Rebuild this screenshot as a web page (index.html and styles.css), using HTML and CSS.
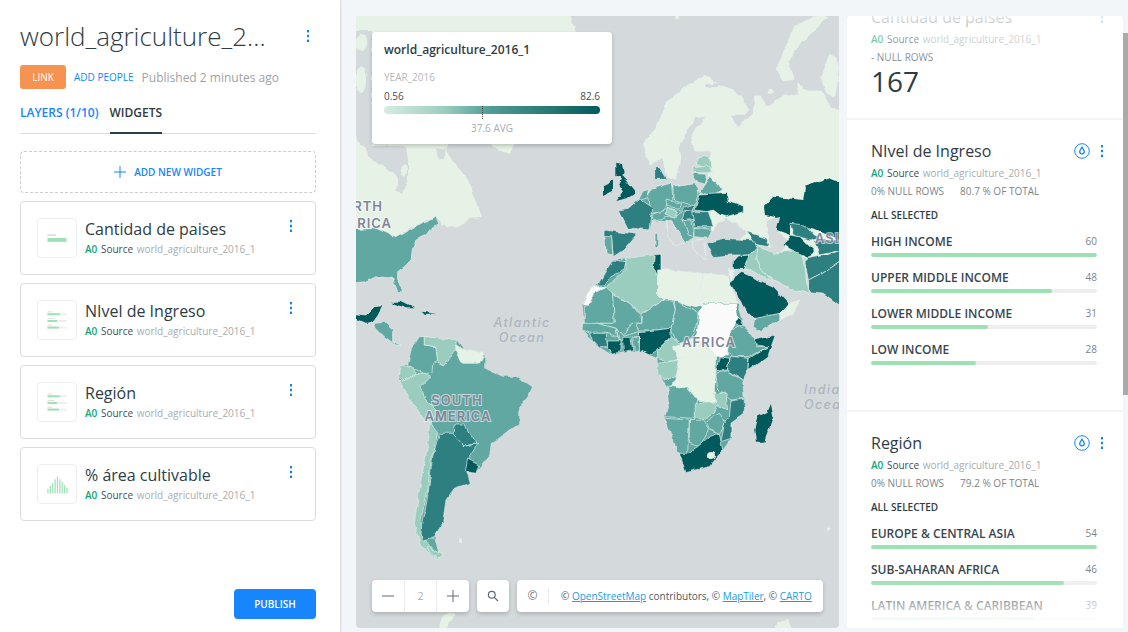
FILE: index.html
```html
<!DOCTYPE html>
<html lang="en">
<head>
<meta charset="utf-8">
<title>world_agriculture_2016_1</title>
<link rel="stylesheet" href="styles.css">
</head>
<body>
<svg class="defs" width="0" height="0" aria-hidden="true">
  <symbol id="kebab" viewBox="0 0 4 14"><rect x="1" y="1" width="2" height="2.4"/><rect x="1" y="5.8" width="2" height="2.4"/><rect x="1" y="10.6" width="2" height="2.4"/></symbol>
  <symbol id="drop" viewBox="0 0 16 16"><circle cx="8" cy="8" r="7.3" fill="none" stroke="currentColor"/><path d="M8 4.2c1.3 1.8 2.3 3 2.3 4.4a2.3 2.3 0 0 1-4.6 0C5.700 7.200 6.700 6 8 4.200z" fill="none" stroke="currentColor" stroke-width="1.300"/></symbol>
  <symbol id="cat" viewBox="0 0 40 40"><g class="t-g"><rect x="10" y="11" width="5" height="1"/><rect x="10" y="18" width="7" height="1"/><rect x="10" y="25" width="5" height="1"/></g><g class="t-t"><rect x="10" y="13" width="20" height="2"/><rect x="10" y="20" width="20" height="2"/><rect x="10" y="27" width="20" height="2"/></g><g class="t-b"><rect x="10" y="13" width="13" height="2"/><rect x="10" y="20" width="10" height="2"/><rect x="10" y="27" width="12" height="2"/></g></symbol>
</svg>

<aside class="sidebar">
  <header class="head">
    <h1 class="name">world_agriculture_2...</h1>
    <svg class="kebab"><use href="#kebab"/></svg>
  </header>
  <div class="share">
    <span class="link-btn">LINK</span>
    <span class="add-people">ADD PEOPLE</span>
    <span class="published">Published 2 minutes ago</span>
  </div>
  <nav class="tabs">
    <span class="tab">LAYERS (1/10)</span>
    <span class="tab active">WIDGETS</span>
  </nav>
  <div class="add-widget">
    <svg class="plus" viewBox="0 0 12 12"><path d="M6 0v12M0 6h12"/></svg>
    <span>ADD NEW WIDGET</span>
  </div>
  <ul class="w-list">
    <li class="w-card">
      <svg class="thumb" viewBox="0 0 40 40"><rect class="gray" x="10" y="16" width="9" height="2"/><rect class="green" x="10" y="20" width="20" height="4"/></svg>
      <div class="w-text">
        <div class="w-title">Cantidad de paises</div>
        <div class="source"><b>A0</b> <i>Source</i> <span>world_agriculture_2016_1</span></div>
      </div>
      <svg class="kebab w-kebab"><use href="#kebab"/></svg>
    </li>
    <li class="w-card">
      <svg class="thumb"><use href="#cat"/></svg>
      <div class="w-text">
        <div class="w-title">NIvel de Ingreso</div>
        <div class="source"><b>A0</b> <i>Source</i> <span>world_agriculture_2016_1</span></div>
      </div>
      <svg class="kebab w-kebab"><use href="#kebab"/></svg>
    </li>
    <li class="w-card">
      <svg class="thumb"><use href="#cat"/></svg>
      <div class="w-text">
        <div class="w-title">Región</div>
        <div class="source"><b>A0</b> <i>Source</i> <span>world_agriculture_2016_1</span></div>
      </div>
      <svg class="kebab w-kebab"><use href="#kebab"/></svg>
    </li>
    <li class="w-card">
      <svg class="thumb" viewBox="0 0 40 40"><path class="hist" d="M10.500 25v5M13 22v8M15.500 19v11M18 15v15M20.500 12v18M23 15v15M25.500 18v12M28 21v9M30.500 24v6"/></svg>
      <div class="w-text">
        <div class="w-title">% área cultivable</div>
        <div class="source"><b>A0</b> <i>Source</i> <span>world_agriculture_2016_1</span></div>
      </div>
      <svg class="kebab w-kebab"><use href="#kebab"/></svg>
    </li>
  </ul>
  <div class="publish-row"><span class="publish">PUBLISH</span></div>
</aside>

<main class="workspace">
  <section class="map">
    <svg class="map-svg" viewBox="356 16 483 612" preserveAspectRatio="none">
      <defs>
        <filter id="rough" filterUnits="userSpaceOnUse" x="346" y="6" width="503" height="632">
          <feTurbulence type="fractalNoise" baseFrequency=".11" numOctaves="2" seed="4" result="n"/>
          <feDisplacementMap in="SourceGraphic" in2="n" scale="4.5" xChannelSelector="R" yChannelSelector="G"/>
          <feGaussianBlur stdDeviation=".35"/>
        </filter>
      </defs>
      <rect class="sea" x="356" y="16" width="483" height="612"/>
      <g filter="url(#rough)">
      <g class="shapes">
        <polygon class="c0 nb" points="350,10 569,10 578,40 570,70 540,110 512,145 510,154 498,150 490,144 470,110 446,150 452,160 468,180 476,200 482,217 470,218 458,226 448,228 440,222 436,217 410,228 397,237 350,226"/>
        <polygon class="sea nb" points="363,146 406,146 408,160 408,178 402,194 396,190 398,178 383,166 370,158"/>
        <polygon class="sea nb" points="350,30 372,30 372,146 362,146 350,130"/>
        <ellipse class="c0 nb" cx="361" cy="42" rx="6" ry="8"/>
        <ellipse class="c0 nb" cx="361" cy="80" rx="5" ry="13"/>
        <ellipse class="c0 nb" cx="404" cy="170" rx="3" ry="6"/>
        <polygon class="sea nb" points="436,148 446,150 444,158 438,160"/>
        <polygon class="c0 nb" points="437,632 442,618 450,612 457,614 449,622 446,632"/>
        <polygon class="c0 nb" points="773,632 778,622 788,620 793,632"/>
        <circle class="c0 nb" cx="677" cy="17" r="2"/>
        <circle class="c0 nb" cx="461" cy="540" r="2"/>
        <circle class="c0 nb" cx="828" cy="529" r="1.500"/>
      </g>

      <g class="shapes" transform="translate(356 160) scale(.3333)">
        <polygon class="c2" points="-15,210 60,205 116,230 150,215 185,195 215,185 240,168 248,195 225,205 210,225 180,240 170,260 165,300 145,320 125,335 125,360 140,395 125,395 110,355 85,352 60,350 30,365 -15,370"/>
        <polygon class="c4" points="-15,460 30,465 55,440 80,437 65,465 50,485 30,490 -15,470"/>
        <polygon class="c2" points="55,490 85,487 110,510 110,545 135,555 120,555 85,530 60,505"/>
        <polygon class="c4 nb" points="105,425 135,425 175,445 150,445"/>
        <polygon class="c4 nb" points="200,455 240,462 210,465"/>

        <polygon class="c2 nb" points="165,570 190,530 300,540 325,570 385,580 385,625 440,650 480,650 525,680 515,710 490,740 490,790 420,840 405,850 400,885 370,920 360,940 328,935 340,970 295,985 270,1020 260,1090 235,1130 250,1190 240,1195 195,1160 175,1090 195,960 215,860 225,790 160,720 130,660 135,620 155,615"/>
        <polygon class="c2" points="165,570 190,530 205,530 205,555 240,560 245,605 230,610 228,640 200,640 155,615"/>
        <polygon class="c1" points="205,530 300,540 300,565 265,615 245,605 240,560 205,555"/>
        <polygon class="c0" points="300,555 325,570 385,580 370,610 320,610 300,565"/>
        <polygon class="c1" points="135,620 175,620 180,640 145,665 130,650"/>
        <polygon class="c1" points="145,665 180,640 200,640 225,650 195,680 205,715 245,755 225,790 200,770 160,720 130,660"/>
        <polygon class="c3" points="295,795 325,795 360,850 325,860 290,825"/>
        <polygon class="c1" points="225,790 245,815 225,900 215,990 195,1080 210,1140 250,1190 240,1195 195,1160 175,1090 195,960 215,860"/>
        <polygon class="c3" points="250,820 290,820 325,860 365,850 345,880 330,940 340,970 295,985 270,1020 260,1090 235,1130 200,1140 195,1120 215,1010 230,890"/>
        <polygon class="c4" points="335,897 368,915 360,940 328,935"/>
        <polygon class="c1" points="215,1160 260,1185 245,1195 215,1170"/>

        <polygon class="c2 nb" points="725,375 745,340 770,300 810,295 890,285 915,282 915,330 945,330 1035,340 1115,345 1145,430 1165,497 1195,540 1258,525 1235,590 1175,632 1160,660 1165,715 1165,760 1125,790 1125,835 1100,870 1060,920 990,938 970,880 945,820 925,770 940,725 935,680 905,640 905,595 880,585 850,570 802,578 765,583 730,560 710,540 678,510 685,490 680,435 695,395"/>
        <polygon class="c3" points="770,300 810,305 805,330 765,350 745,375 725,375 745,340"/>
        <polygon class="cw" points="715,380 750,378 715,400 700,435 680,435 695,395"/>
        <polygon class="c2" points="750,380 770,385 775,490 725,490 700,495 685,490 685,440 700,435 715,400"/>
        <polygon class="c2" points="770,400 855,460 858,490 825,490 800,530 780,505 725,490 775,490"/>
        <polygon class="c1" points="810,295 890,285 905,350 905,400 925,420 860,460 770,400 750,380 810,330"/>
        <polygon class="c4" points="895,285 915,282 915,330 905,348 892,320"/>
        <polygon class="c0" points="905,350 905,330 945,330 1035,340 1040,435 1015,440 950,420 925,420 905,400"/>
        <polygon class="c0" points="1035,340 1115,345 1145,430 1040,430"/>
        <polygon class="c2" points="860,460 925,420 950,420 958,450 945,505 900,510 850,510 835,490 858,490"/>
        <polygon class="c2" points="955,420 1028,460 1015,520 985,560 965,555 945,505 958,450"/>
        <polygon class="cw nb" points="1040,432 1140,432 1148,475 1125,510 1118,585 1080,590 1020,530 1030,460"/>
        <polygon class="c4" points="850,515 900,510 945,505 945,530 905,570 880,585 850,570"/>
        <polygon class="c2" points="780,505 800,530 850,515 850,545 790,540"/>
        <polygon class="c2" points="680,490 725,490 780,505 785,530 750,520 700,520 678,510"/>
        <polygon class="c3" points="700,520 750,520 755,560 730,560 710,540"/>
        <polygon class="c4" points="755,540 795,540 795,575 765,583 755,565"/>
        <polygon class="c4" points="800,532 825,532 830,572 802,578"/>
        <polygon class="c2" points="830,530 850,530 850,570 835,572"/>
        <polygon class="c1" points="905,570 945,530 985,560 950,565 970,600 930,605 905,595"/>
        <polygon class="c0" points="950,560 1020,530 1080,590 980,590 965,595"/>
        <polygon class="c2" points="1125,510 1150,497 1190,525 1205,560 1235,560 1180,590 1135,590 1118,575"/>
        <polygon class="c4" points="1135,495 1148,472 1165,497"/>
        <polygon class="c4" points="1195,540 1258,525 1235,590 1175,632 1180,595 1235,560 1205,555"/>
        <polygon class="c4" points="1090,590 1118,595 1115,630 1080,632"/>
        <polygon class="c3" points="1120,590 1135,590 1178,595 1175,632 1160,660 1115,630"/>
        <polygon class="c0" points="980,590 1078,590 1080,632 1075,690 1085,730 1050,725 1025,720 995,685 935,680 960,660 965,595"/>
        <polygon class="c1" points="905,610 970,600 960,650 925,660 905,640"/>
        <polygon class="c2" points="1080,640 1115,632 1160,662 1165,715 1125,720 1085,690"/>
        <polygon class="c2" points="935,675 995,685 1025,720 1015,775 925,770 940,725"/>
        <polygon class="c1" points="1015,735 1060,725 1085,735 1075,760 1040,780 1015,770"/>
        <polygon class="c1" points="1070,700 1110,700 1115,750 1090,740"/>
        <polygon class="c3" points="1125,722 1165,718 1165,760 1125,790 1125,835 1095,845 1105,790 1120,770"/>
        <polygon class="c2" points="1050,785 1090,760 1108,790 1090,820 1060,805"/>
        <polygon class="c2" points="1000,782 1040,780 1060,810 1030,860 1000,850"/>
        <polygon class="c2" points="925,775 1000,780 995,880 965,880 945,820"/>
        <polygon class="c4" points="970,880 995,880 1025,860 1060,830 1090,820 1100,870 1060,920 990,938"/>
        <ellipse class="c0" cx="1065" cy="888" rx="11" ry="11"/>
        <polygon class="c4 nb" points="1245,732 1252,770 1225,845 1200,845 1195,810 1205,770 1235,755"/>
      </g>

      <g class="shapes" transform="translate(560 140) scale(.3333)">
        <polygon class="c2 nb" points="175,210 205,205 237,177 270,165 320,150 400,140 420,165 405,210 445,215 460,260 455,268 445,295 405,290 375,305 335,245 280,240 270,270 220,265"/>
      </g>

      <g class="shapes" transform="translate(598 16) scale(.3333)">
        <polygon class="c0" points="345,215 380,210 430,240 450,280 435,295 400,295 420,335 465,290 470,240 490,240 500,275 560,235 600,240 600,200 620,225 670,225 695,270 735,290 735,760 340,640 330,470 340,405 365,355 350,300"/>
        <polygon class="c0" points="535,160 590,30 660,0 690,5 640,50 590,100 570,135 590,190 560,195"/>
        <polygon class="c0" points="668,185 695,115 715,125 722,180 710,245 685,230"/>
        <circle class="c0 nb" cx="517" cy="228" r="9"/>
        <polygon class="c0" points="140,375 175,335 210,255 260,215 320,178 355,200 320,205 290,240 230,310 205,340 205,420 155,445 138,400"/>
        <polygon class="c0" points="205,340 230,310 290,240 320,205 330,300 290,305 245,385 250,430 235,490 205,480 195,425"/>
        <polygon class="c0" points="345,215 350,300 365,355 340,405 290,405 280,360 312,310 330,300 320,210"/>
        <polygon class="sea nb" points="295,305 312,312 280,360 278,405 300,415 275,455 240,490 250,430 245,385"/>
        <polygon class="c1" points="300,425 335,420 340,465 295,445"/>
        <polygon class="c1" points="285,455 330,450 345,470 285,470"/>
        <polygon class="c2" points="280,472 325,475 318,505 290,495"/>
        <polygon class="c2" points="335,478 365,510 370,520 350,540 305,530 320,505"/>
        <polygon class="c2" points="225,510 295,500 300,540 290,570 225,550"/>
        <polygon class="c2" points="160,520 220,500 225,550 190,590 155,590 150,545"/>
        <polygon class="c3" points="170,455 185,455 205,490 170,490"/>
        <polygon class="c4 nb" points="55,440 75,445 80,470 70,480 85,495 105,520 112,530 90,545 55,555 75,530 62,510 72,490 55,480"/>
        <polygon class="c4 nb" points="15,510 30,505 45,490 45,525 15,540"/>
        <polygon class="c2" points="135,525 155,520 150,545 120,555"/>
      </g>

      <g class="shapes" transform="translate(560 140) scale(.3333)">
        <polygon class="sea nb" points="450,290 475,245 500,235 530,250 560,280 540,297 490,295"/>
        <polygon class="sea" points="320,245 335,245 375,305 345,320 325,290"/>
        <polygon class="c2" points="285,280 293,280 293,320 285,320"/>
        <polygon class="c4" points="420,165 500,160 505,185 550,200 550,215 500,230 480,225 460,210 440,215 405,210"/>
        <polygon class="c3" points="237,177 278,205 270,270 220,265 205,270 175,210 205,205"/>
        <polygon class="c3" points="135,270 230,283 190,330 160,350 155,295 135,290"/>
        <polygon class="c2" points="135,290 155,290 158,345 138,340"/>
        <polygon class="c2" points="320,180 365,190 360,205 325,200"/>
        <polygon class="c2" points="275,225 330,205 370,215 340,230 280,240"/>
        <polygon class="c1" points="322,205 350,212 345,235 318,225"/>
        <polygon class="c3" points="375,215 400,210 405,235 365,240"/>
        <polygon class="c3" points="395,215 445,215 460,260 405,260"/>
        <polygon class="c3" points="365,205 405,195 400,212 370,215"/>
        <polygon class="c2" points="370,240 395,240 405,290 385,285"/>
        <polygon class="c2" points="405,262 455,268 445,295 405,290"/>
        <polygon class="sea" points="395,305 430,300 440,360 410,340"/>
        <polygon class="c3" points="440,310 490,295 580,300 590,320 585,345 510,345 460,350"/>
        <polygon class="c3" points="560,275 620,295 630,320 590,315"/>
        <polygon class="c1" points="590,315 640,340 720,330 735,380 740,430 750,460 700,450 650,425 610,400 590,360"/>
        <polygon class="c1" points="550,385 568,345 590,320 590,360 610,400 640,425 620,420 565,385"/>
        <polygon class="c4" points="520,365 535,348 568,345 550,385 520,385"/>
        <polygon class="c4 nb" points="510,425 545,398 595,420 640,440 685,490 660,520 585,535 560,510"/>
        <polygon class="c2" points="585,535 660,520 660,540 600,575 580,560"/>
        <polygon class="c0" points="660,520 690,490 720,480 700,520 660,540"/>
        <polygon class="c0" points="505,385 520,390 515,420"/>
        <polygon class="c4 nb" points="612,200 640,170 730,180 735,140 810,115 845,130 845,300 780,275 690,250 690,285 650,270 645,230 615,225"/>
        <polygon class="sea nb" points="620,240 660,230 650,270 680,300 670,330 640,340 620,280"/>
        <polygon class="c3" points="690,250 735,255 760,285 780,290 750,300 700,285"/>
        <polygon class="c4" points="670,315 690,285 720,290 760,330 745,355 690,330"/>
        <polygon class="c3" points="760,300 845,300 845,330 780,345"/>
        <polygon class="c3" points="735,365 745,355 800,345 845,330 845,360 785,400 745,420"/>
        <polygon class="c3" points="745,420 785,400 845,360 845,500 790,460 750,455"/>
      </g>
      </g>

      <g class="labels">
        <text x="383" y="211" text-anchor="end">NORTH</text>
        <text x="392" y="228" text-anchor="end">AMERICA</text>
        <text x="457" y="405" text-anchor="middle">SOUTH</text>
        <text x="458" y="421" text-anchor="middle">AMERICA</text>
        <text x="709" y="347" text-anchor="middle">AFRICA</text>
        <text x="815" y="243">ASIA</text>
      </g>
      <g class="oceans">
        <text x="522" y="327" text-anchor="middle">Atlantic</text>
        <text x="522" y="342" text-anchor="middle">Ocean</text>
        <text x="804" y="394">Indian</text>
        <text x="804" y="409">Ocean</text>
      </g>
    </svg>

    <div class="legend">
      <div class="lg-title">world_agriculture_2016_1</div>
      <div class="lg-field">YEAR_2016</div>
      <div class="lg-range"><span>0.56</span><span>82.6</span></div>
      <div class="lg-bar"><i class="lg-tick"></i></div>
      <div class="lg-avg">37.6 AVG</div>
    </div>

    <div class="controls">
      <div class="ctl ctl-zoom">
        <span class="z-btn"><svg viewBox="0 0 12 12"><path d="M0 6h12"/></svg></span>
        <span class="z-btn z-num">2</span>
        <span class="z-btn"><svg viewBox="0 0 12 12"><path d="M6 0v12M0 6h12"/></svg></span>
      </div>
      <div class="ctl ctl-search">
        <svg viewBox="0 0 12 12"><circle cx="4.800" cy="4.800" r="3.400"/><path d="M7.300 7.300L11 11"/></svg>
      </div>
      <div class="ctl ctl-attr">
        <span class="copy">©</span>
        <span class="attr">© <a>OpenStreetMap</a> contributors, © <a>MapTiler</a>, © <a>CARTO</a></span>
      </div>
    </div>
  </section>

  <section class="panel">
    <div class="panel-inner">
      <article class="rw rw-count">
        <div class="rw-head"><h2>Cantidad de paises</h2><svg class="kebab"><use href="#kebab"/></svg></div>
        <div class="source"><b>A0</b> <i>Source</i> <span>world_agriculture_2016_1</span></div>
        <div class="stats"><span>- NULL ROWS</span></div>
        <div class="big">167</div>
      </article>
      <article class="rw">
        <div class="rw-head">
          <h2>NIvel de Ingreso</h2>
          <svg class="drop"><use href="#drop"/></svg>
          <svg class="kebab"><use href="#kebab"/></svg>
        </div>
        <div class="source"><b>A0</b> <i>Source</i> <span>world_agriculture_2016_1</span></div>
        <div class="stats"><span>0% NULL ROWS</span><span>80.7 % OF TOTAL</span></div>
        <div class="selected">ALL SELECTED</div>
        <div class="row"><div class="row-l"><span>HIGH INCOME</span><em>60</em></div><div class="track"><div class="fill" style="width:100%"></div></div></div>
        <div class="row"><div class="row-l"><span>UPPER MIDDLE INCOME</span><em>48</em></div><div class="track"><div class="fill" style="width:80%"></div></div></div>
        <div class="row"><div class="row-l"><span>LOWER MIDDLE INCOME</span><em>31</em></div><div class="track"><div class="fill" style="width:51.700%"></div></div></div>
        <div class="row"><div class="row-l"><span>LOW INCOME</span><em>28</em></div><div class="track"><div class="fill" style="width:46.500%"></div></div></div>
      </article>
      <article class="rw">
        <div class="rw-head">
          <h2>Región</h2>
          <svg class="drop"><use href="#drop"/></svg>
          <svg class="kebab"><use href="#kebab"/></svg>
        </div>
        <div class="source"><b>A0</b> <i>Source</i> <span>world_agriculture_2016_1</span></div>
        <div class="stats"><span>0% NULL ROWS</span><span>79.2 % OF TOTAL</span></div>
        <div class="selected">ALL SELECTED</div>
        <div class="row"><div class="row-l"><span>EUROPE &amp; CENTRAL ASIA</span><em>54</em></div><div class="track"><div class="fill" style="width:100%"></div></div></div>
        <div class="row"><div class="row-l"><span>SUB-SAHARAN AFRICA</span><em>46</em></div><div class="track"><div class="fill" style="width:85.200%"></div></div></div>
        <div class="row"><div class="row-l"><span>LATIN AMERICA &amp; CARIBBEAN</span><em>39</em></div><div class="track"><div class="fill" style="width:72.200%"></div></div></div>
      </article>
    </div>
    <div class="fade fade-top"></div>
    <div class="fade fade-bottom"></div>
  </section>
  <div class="scrollbar"><div class="thumb-bar"></div></div>
</main>
</body>
</html>
```
FILE: styles.css
```css
* { box-sizing: border-box; }
html, body { margin: 0; height: 100%; }
body {
  display: flex;
  width: 1128px;
  height: 632px;
  overflow: hidden;
  background: #f2f6f9;
  font-family: "Open Sans", "Liberation Sans", sans-serif;
  color: #2e3c43;
}
.defs { position: absolute; }
.kebab { width: 4px; height: 14px; fill: #0a84ee; flex: none; }

/* sidebar */
.sidebar {
  width: 340px;
  flex: none;
  display: flex;
  flex-direction: column;
  background: #fff;
  padding: 15px 24px 13px 20px;
  box-shadow: 1px 0 2px rgba(0, 0, 0, .12);
  z-index: 2;
}
.head { display: flex; align-items: center; justify-content: space-between; height: 42px; }
.name { margin: 0; font-size: 26px; font-weight: 300; line-height: 42px; color: #2e3c43; white-space: nowrap; }
.head .kebab { margin-right: 6px; }
.share { display: flex; align-items: center; margin-top: 8px; height: 24px; }
.link-btn {
  width: 46px; height: 24px; line-height: 24px; text-align: center;
  background: #f79350; color: #fff; font-size: 10px; font-weight: 400; border-radius: 3px;
}
.add-people { margin-left: 8px; font-size: 10px; font-weight: 400; color: #1785fb; }
.published { margin-left: 8px; font-size: 12px; color: #9ea3a6; }
.tabs { display: flex; gap: 11px; margin-top: 12px; height: 33px; border-bottom: 1px solid #ddd; }
.tab { font-size: 12px; font-weight: 600; line-height: 24px; color: #1785fb; height: 33px; }
.tab.active { color: #2e3c43; border-bottom: 2px solid #2e3c43; }
.add-widget {
  margin-top: 17px; height: 42px;
  display: flex; align-items: center; justify-content: center; gap: 8px;
  border: 1px dashed #ccc; border-radius: 4px;
  font-size: 10px; font-weight: 600; color: #1785fb;
}
.plus { width: 12px; height: 12px; fill: none; stroke: #1785fb; stroke-width: 1; }
.w-list { list-style: none; margin: 8px 0 0; padding: 0; display: flex; flex-direction: column; gap: 8px; }
.w-card {
  height: 74px; display: flex; align-items: center;
  padding: 0 22px 0 16px;
  border: 1px solid #ddd; border-radius: 4px;
}
.thumb { width: 40px; height: 40px; border: 1px solid #eee; border-radius: 4px; flex: none; }
.gray, .t-g { fill: #ddd; }
.t-t { fill: #eee; }
.green, .t-b { fill: #9ce0b4; }
.hist { fill: none; stroke: #9ce0b4; stroke-width: 1.300; }
.w-text { flex: 1; margin-left: 8px; padding-bottom: 2px; }
.w-title { font-size: 16px; line-height: 22px; color: #2e3c43; }
.source { font-size: 10px; line-height: 14px; white-space: nowrap; color: #2e3c43; }
.w-title + .source { margin-top: 2px; }
.source b { font-weight: 600; color: #0fa67d; }
.source i { font-style: normal; margin-left: 1px; color: #3f4d54; }
.source span { color: #a8adb0; margin-left: 1px; }
.w-kebab { align-self: flex-start; margin-top: 17px; }
.publish-row { margin-top: auto; display: flex; justify-content: flex-end; }
.publish {
  width: 82px; height: 30px; line-height: 30px; text-align: center;
  background: #1785fb; color: #fff; font-size: 10px; font-weight: 600; border-radius: 4px;
}

/* workspace */
.workspace { flex: 1; display: flex; align-items: stretch; padding: 16px 0 4px 16px; gap: 8px; min-width: 0; }

/* map */
.map { position: relative; width: 483px; flex: none; border-radius: 0 0 4px 4px; overflow: hidden; }
.map-svg { display: block; width: 100%; height: 100%; }
.sea { fill: #d4dadc; }
.shapes polygon, .shapes ellipse { stroke: #e9f2ef; stroke-width: 2; stroke-linejoin: round; }
.shapes .nb { stroke: none; }
.shapes .sea { fill: #d4dadc; }
.c0 { fill: #e7f2e6; }
.c1 { fill: #9bcdbf; }
.c2 { fill: #60a8a1; }
.c3 { fill: #2e7f80; }
.c4 { fill: #045a5c; }
.cw { fill: #fbfafa; }
.labels text {
  font-family: "Inter", "Open Sans", sans-serif;
  font-size: 13px; font-weight: 600; letter-spacing: 1px;
  fill: #80869a; stroke: #fff; stroke-width: 2; stroke-opacity: .6; paint-order: stroke;
}
.oceans text {
  font-family: "Inter", "Open Sans", sans-serif;
  font-size: 12.500px; font-style: italic; font-weight: 500; letter-spacing: 1.400px;
  fill: #aeb5bf;
}

.legend {
  position: absolute; left: 16px; top: 16px; width: 240px; height: 112px;
  background: #fff; border-radius: 4px; padding: 11px 12px;
  box-shadow: 0 2px 4px rgba(0, 0, 0, .2);
}
.lg-title { font-size: 12px; font-weight: 600; line-height: 14px; color: #2e3c43; }
.lg-field { margin-top: 14px; font-size: 10px; line-height: 12px; color: #b4b8ba; }
.lg-range { display: flex; justify-content: space-between; margin-top: 7px; font-size: 10px; line-height: 12px; color: #3f4d54; }
.lg-bar {
  position: relative; height: 8px; margin-top: 4px; border-radius: 4px;
  background: linear-gradient(90deg, #d8ece0, #9bcdbf 28%, #4f9a95 50%, #045a5c);
}
.lg-tick { position: absolute; left: 98px; top: 0; height: 13px; border-left: 1px dotted #444; }
.lg-avg { margin-top: 8px; font-size: 10px; line-height: 12px; text-align: center; color: #a8adb0; }

.controls { position: absolute; left: 16px; top: 564px; display: flex; gap: 8px; height: 32px; }
.ctl { height: 32px; background: #fff; border-radius: 4px; box-shadow: 0 2px 4px rgba(0, 0, 0, .2); display: flex; align-items: center; }
.ctl-zoom { width: 97px; }
.z-btn { flex: 1; height: 32px; display: flex; align-items: center; justify-content: center; border-left: 1px solid #eee; }
.z-btn:first-child { border-left: 0; }
.z-btn svg { width: 12px; height: 12px; fill: none; stroke: #5f6b70; stroke-width: 1; }
.z-num { font-size: 10px; color: #a8adb0; }
.ctl-search { width: 32px; justify-content: center; }
.ctl-search svg { width: 12px; height: 12px; fill: none; stroke: #5f6b70; stroke-width: 1.200; }
.ctl-attr { width: 306px; font-size: 10px; color: #4d5a60; white-space: nowrap; }
.copy { width: 32px; height: 16px; line-height: 16px; text-align: center; font-size: 12px; color: #6f7a7f; border-right: 1px solid #eee; flex: none; }
.attr { margin-left: 12px; }
.attr a { color: #1a9be8; text-decoration: underline; }

/* right panel */
.panel { position: relative; width: 276px; flex: none; background: #fff; border-radius: 4px; overflow: hidden; }
.panel-inner { margin-top: -28px; }
.rw { height: 292px; padding: 21px 26px 0 24px; border-bottom: 2px solid #f2f6f9; }
.rw-count { height: 132px; padding-top: 19px; }
.rw-head { display: flex; align-items: center; height: 20px; }
.rw-head h2 { flex: 1; margin: 0; font-size: 16px; font-weight: 400; line-height: 20px; color: #2e3c43; }
.drop { width: 16px; height: 16px; color: #1785fb; margin-right: 10px; }
.rw-head .kebab { margin-right: -7px; }
.rw .source { margin-top: 5px; line-height: 14px; }
.stats { display: flex; gap: 16px; margin-top: 4px; font-size: 10px; line-height: 14px; color: #7b8589; }
.big { font-size: 28px; line-height: 34px; color: #2e3c43; margin-top: 0; }
.selected { margin-top: 10px; font-size: 10px; font-weight: 600; line-height: 14px; color: #2e3c43; }
.row { margin-top: 8px; height: 28px; }
.selected + .row { margin-top: 10px; }
.row-l { display: flex; justify-content: space-between; align-items: center; height: 18px; }
.row-l span { font-size: 12px; font-weight: 600; color: #38464d; }
.row-l em { font-style: normal; font-size: 10px; color: #7b8589; }
.track { height: 4px; margin-top: 3px; background: #eee; border-radius: 2px; overflow: hidden; }
.fill { height: 4px; background: #9ce0b4; border-radius: 2px; }
.fade { position: absolute; left: 0; right: 0; height: 48px; pointer-events: none; }
.fade-top { top: 0; background: linear-gradient(rgba(255, 255, 255, .85), rgba(255, 255, 255, 0)); }
.fade-bottom { bottom: 0; background: linear-gradient(rgba(255, 255, 255, 0), #fff 90%); }

.scrollbar { width: 5px; flex: none; margin-left: -8px; }
.thumb-bar { margin-top: 17px; height: 362px; background: #aaa; }
```
